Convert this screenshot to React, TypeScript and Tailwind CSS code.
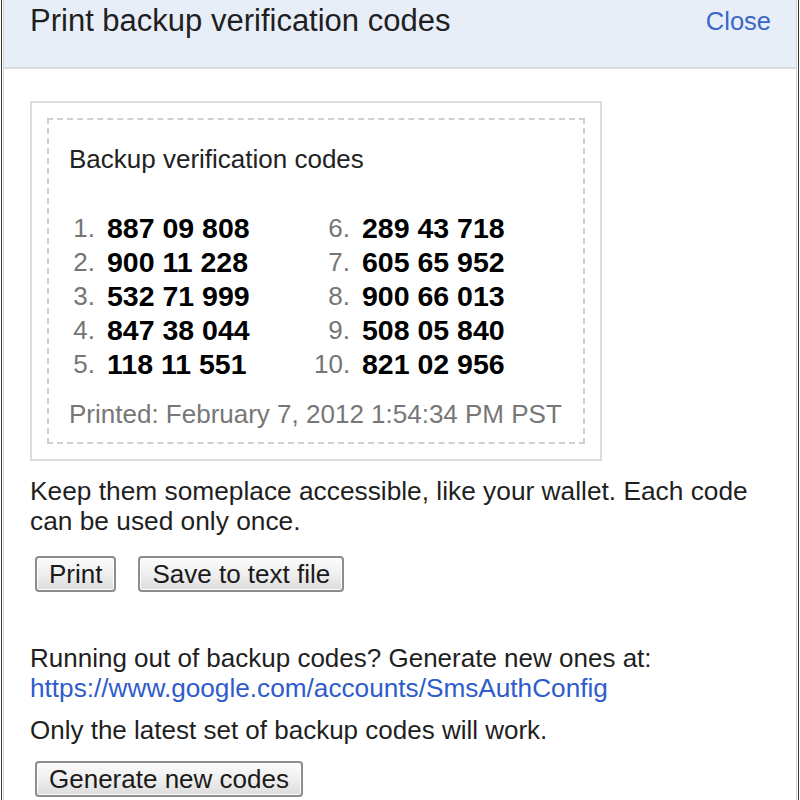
import React from "react";

const codes: [string, string, string, string][] = [
  ["1.", "887 09 808", "6.", "289 43 718"],
  ["2.", "900 11 228", "7.", "605 65 952"],
  ["3.", "532 71 999", "8.", "900 66 013"],
  ["4.", "847 38 044", "9.", "508 05 840"],
  ["5.", "118 11 551", "10.", "821 02 956"],
];

function Btn({ children }: { children: React.ReactNode }) {
  return (
    <button className="h-[36px] px-[12px] rounded-[4px] border-2 border-[#8c8c8c] bg-gradient-to-b from-[#fbfbfb] via-[#efefef] to-[#dcdcdc] text-[26px] leading-[32px] text-[#1a1a1a] shadow-[inset_0_0_0_1px_#ffffff]">
      {children}
    </button>
  );
}

export default function App() {
  return (
    <div className="w-[800px] h-[800px] overflow-hidden bg-white px-px font-['Liberation_Sans',Arial,sans-serif] text-[#1f1f1f]">
      <div className="h-full border-x border-[#3a3a3a] px-px">
        <div className="h-full border-x border-[#d6d6d6]">
          <div className="h-[69px] bg-[#e8eef8] border-b-2 border-[#dcdcdc] flex justify-between items-start pl-[26px] pr-[25px] pt-[4px]">
            <div className="text-[31px] leading-[34px] text-[#1f1f1f]">Print backup verification codes</div>
            <div className="text-[25.5px] leading-[34px] text-[#3a66c8]">Close</div>
          </div>
          <div className="pl-[26px]">
            <div className="mt-[32px] w-[572px] border-2 border-[#dcdcdc] p-[15px]">
              <div className="border-2 border-dashed border-[#d0d0d0] pl-[20px] pt-[24px] pb-[13px]">
                <div className="text-[26px] leading-[30px] text-[#222]">Backup verification codes</div>
                <div className="-ml-[10px] mt-[37px] grid grid-cols-[36px_195px_36px_auto] gap-x-[12px]">
                  {codes.map((r) => (
                    <React.Fragment key={r[0]}>
                      <div className="text-right text-[26px] leading-[34px] text-[#757575]">{r[0]}</div>
                      <div className="font-bold text-[28.5px] leading-[34px] text-black">{r[1]}</div>
                      <div className="text-right text-[26px] leading-[34px] text-[#757575]">{r[2]}</div>
                      <div className="font-bold text-[28.5px] leading-[34px] text-black">{r[3]}</div>
                    </React.Fragment>
                  ))}
                </div>
                <div className="mt-[18px] text-[26px] leading-[30px] text-[#777]">Printed: February 7, 2012 1:54:34 PM PST</div>
              </div>
            </div>
            <div className="mt-[15px] text-[26.3px] leading-[30px]">
              Keep them someplace accessible, like your wallet. Each code
              <br />
              can be used only once.
            </div>
            <div className="mt-[20px] ml-[5px] flex gap-[22px]">
              <Btn>Print</Btn>
              <Btn>Save to text file</Btn>
            </div>
            <div className="mt-[51px] text-[26px] leading-[30px]">Running out of backup codes? Generate new ones at:</div>
            <div className="text-[26.2px] leading-[30px] text-[#2f5ccc]">https://www.google.com/accounts/SmsAuthConfig</div>
            <div className="mt-[12px] text-[26px] leading-[30px]">Only the latest set of backup codes will work.</div>
            <div className="mt-[16px] ml-[5px] flex">
              <Btn>Generate new codes</Btn>
            </div>
          </div>
        </div>
      </div>
    </div>
  );
}
